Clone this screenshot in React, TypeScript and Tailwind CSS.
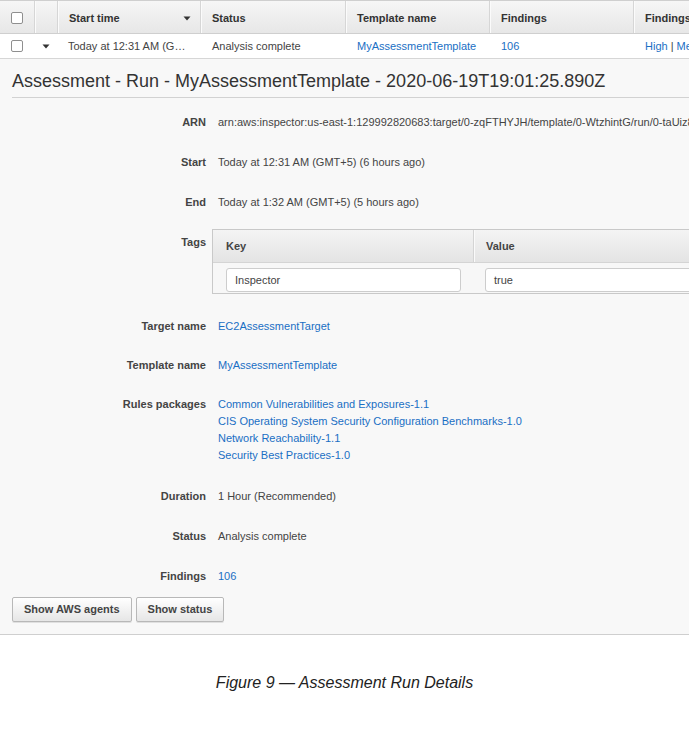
import React from "react";

const Caret = ({ className = "" }: { className?: string }) => (
  <svg width="8" height="5" viewBox="0 0 8 5" className={className}>
    <path d="M0.5 0.5h7L4 4.5z" fill="#333" />
  </svg>
);

const Checkbox = () => (
  <span className="block w-[12px] h-[12px] rounded-[2px] border border-[#8f8f8f] bg-white" />
);

const Link = ({ children }: { children: React.ReactNode }) => (
  <span className="text-[#1a6fc4]">{children}</span>
);

const Row = ({
  label,
  className = "",
  children,
}: {
  label: string;
  className?: string;
  children: React.ReactNode;
}) => (
  <div className={"flex " + className}>
    <div className="w-[206px] shrink-0 text-right font-bold">{label}</div>
    <div className="ml-[12px] whitespace-nowrap">{children}</div>
  </div>
);

export default function App() {
  const hcell =
    "border-l border-[#d6d6d6] shadow-[inset_1px_0_0_#fbfbfb] flex items-center pl-[11px] pt-[2px] overflow-hidden";
  return (
    <div className="w-[689px] h-[729px] overflow-hidden bg-white font-['Liberation_Sans',Arial,sans-serif] text-[11px] leading-[17px] text-[#444]">
      {/* Table header */}
      <div className="grid grid-cols-[34px_23px_143px_145px_144px_144px_200px] h-[34px] border-y border-[#cfcfcf] bg-linear-to-b from-[#f6f6f6] to-[#e7e7e7] font-bold text-[#333] whitespace-nowrap">
        <div className="flex items-center pl-[11px] pt-[1px]">
          <Checkbox />
        </div>
        <div className={hcell}></div>
        <div className={hcell + " justify-between pr-[9px]"}>
          <span>Start time</span>
          <Caret />
        </div>
        <div className={hcell}>Status</div>
        <div className={hcell}>Template name</div>
        <div className={hcell}>Findings</div>
        <div className={hcell}>Findings by severity</div>
      </div>
      {/* Table row */}
      <div className="grid grid-cols-[34px_23px_143px_145px_144px_144px_200px] h-[25px] border-b border-[#d6d6d6] bg-white whitespace-nowrap items-center">
        <div className="flex items-center pl-[11px]">
          <Checkbox />
        </div>
        <div className="flex items-center pl-[8px]">
          <Caret />
        </div>
        <div className="pl-[11px]">Today at 12:31 AM (G…</div>
        <div className="pl-[12px]">Analysis complete</div>
        <div className="pl-[12px]">
          <Link>MyAssessmentTemplate</Link>
        </div>
        <div className="pl-[12px]">
          <Link>106</Link>
        </div>
        <div className="pl-[12px] overflow-hidden">
          <Link>High</Link> | <Link>Medium</Link> | <Link>Low</Link>
        </div>
      </div>

      {/* Details */}
      <div className="bg-[#f8f8f8] border-b border-[#cfcfcf] pb-[12px]">
        <div className="ml-[12px] pt-[11px] pb-[5px] border-b border-[#d2d2d2] text-[18px] leading-[22px] text-[#333] whitespace-nowrap">
          Assessment - Run - MyAssessmentTemplate - 2020-06-19T19:01:25.890Z
        </div>

        <Row label="ARN" className="mt-[16px]">
          arn:aws:inspector:us-east-1:129992820683:target/0-zqFTHYJH/template/0-WtzhintG/run/0-taUiz8Qm
        </Row>
        <Row label="Start" className="mt-[23px]">
          Today at 12:31 AM (GMT+5) (6 hours ago)
        </Row>
        <Row label="End" className="mt-[23px]">
          Today at 1:32 AM (GMT+5) (5 hours ago)
        </Row>

        <div className="flex mt-[18px]">
          <div className="w-[206px] shrink-0 text-right font-bold pt-[5px]">Tags</div>
          <div className="ml-[6px] w-[560px] shrink-0 border border-[#c9c9c9]">
            <div className="flex h-[33px] border-b border-[#d4d4d4] bg-linear-to-b from-[#f4f4f4] to-[#e4e4e4] font-bold text-[#444]">
              <div className="w-[260px] flex items-center pl-[13px]">Key</div>
              <div className="flex-1 flex items-center pl-[12px] border-l border-[#d4d4d4] shadow-[inset_1px_0_0_#fafafa]">
                Value
              </div>
            </div>
            <div className="flex pt-[5px] pb-[1px] bg-[#f7f7f7]">
              <div className="w-[260px] pl-[13px] pr-[12px]">
                <div className="h-[24px] rounded-[3px] border border-[#cdcdcd] bg-white pl-[8px] flex items-center">
                  Inspector
                </div>
              </div>
              <div className="flex-1 pl-[12px]">
                <div className="h-[24px] rounded-[3px] border border-[#cdcdcd] bg-white pl-[8px] flex items-center">
                  true
                </div>
              </div>
            </div>
          </div>
        </div>

        <Row label="Target name" className="mt-[24px]">
          <Link>EC2AssessmentTarget</Link>
        </Row>
        <Row label="Template name" className="mt-[22px]">
          <Link>MyAssessmentTemplate</Link>
        </Row>
        <Row label="Rules packages" className="mt-[22px]">
          <div className="flex flex-col">
            <Link>Common Vulnerabilities and Exposures-1.1</Link>
            <Link>CIS Operating System Security Configuration Benchmarks-1.0</Link>
            <Link>Network Reachability-1.1</Link>
            <Link>Security Best Practices-1.0</Link>
          </div>
        </Row>
        <Row label="Duration" className="mt-[24px]">
          1 Hour (Recommended)
        </Row>
        <Row label="Status" className="mt-[23px]">
          Analysis complete
        </Row>
        <Row label="Findings" className="mt-[23px]">
          <Link>106</Link>
        </Row>

        <div className="flex gap-[4px] ml-[12px] mt-[12px]">
          <button className="h-[25px] px-[11px] rounded-[2px] border border-[#b8b8b8] bg-linear-to-b from-[#ffffff] to-[#e6e6e6] font-bold text-[#444] shadow-[0_1px_0_#e0e0e0]">
            Show AWS agents
          </button>
          <button className="h-[25px] px-[11px] rounded-[2px] border border-[#b8b8b8] bg-linear-to-b from-[#ffffff] to-[#e6e6e6] font-bold text-[#444] shadow-[0_1px_0_#e0e0e0]">
            Show status
          </button>
        </div>
      </div>

      <div className="mt-[38px] text-center italic text-[16px] leading-[20px] text-[#222]">
        Figure 9 — Assessment Run Details
      </div>
    </div>
  );
}
